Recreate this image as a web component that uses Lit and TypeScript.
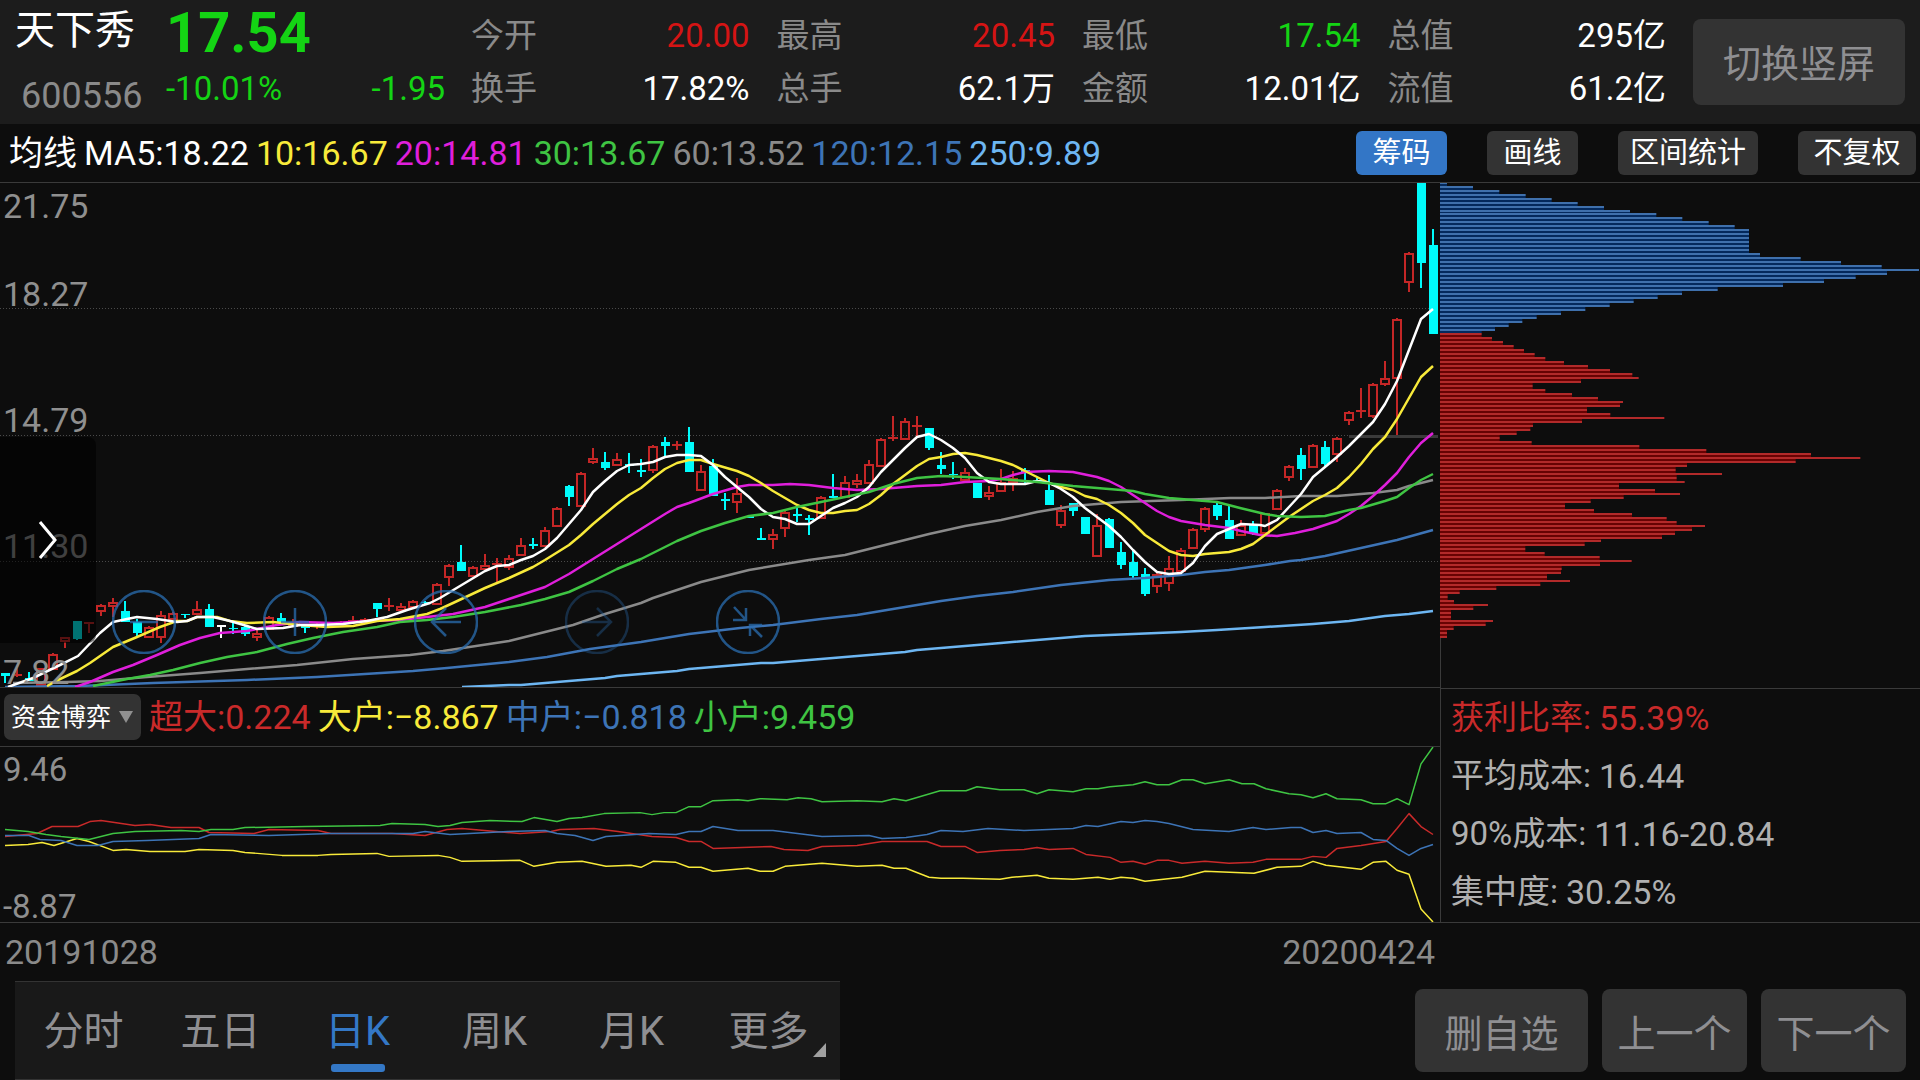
import { LitElement, html, svg, css } from "lit";
import { customElement, property, state } from "lit/decorators.js";
import { classMap } from "lit/directives/class-map.js";

type Tone = "up" | "down" | "flat" | "plain";

interface Quote {
  label: string;
  value: string;
  tone: Tone;
}

interface Series {
  tone: string;
  points: string;
}

const QUOTES: Quote[] = [
  { label: "今开", value: "20.00", tone: "up" },
  { label: "最高", value: "20.45", tone: "up" },
  { label: "最低", value: "17.54", tone: "down" },
  { label: "总值", value: "295亿", tone: "plain" },
  { label: "换手", value: "17.82%", tone: "plain" },
  { label: "总手", value: "62.1万", tone: "plain" },
  { label: "金额", value: "12.01亿", tone: "plain" },
  { label: "流值", value: "61.2亿", tone: "plain" },
];

const AVERAGES = [
  { tone: "white", text: "MA5:18.22" },
  { tone: "yellow", text: "10:16.67" },
  { tone: "magenta", text: "20:14.81" },
  { tone: "green", text: "30:13.67" },
  { tone: "gray", text: "60:13.52" },
  { tone: "blue", text: "120:12.15" },
  { tone: "sky", text: "250:9.89" },
];

const FUNDS = [
  { tone: "red", text: "超大:0.224" },
  { tone: "yellow", text: "大户:−8.867" },
  { tone: "blue", text: "中户:−0.818" },
  { tone: "green", text: "小户:9.459" },
];

/* One entry per trading day: high, body top, body bottom, low, in plot units.
   The letter is r (rise), c (fall) or w (unchanged). */
const CANDLES = `
491 491 494 501 c|486 492 495 495 r|490 496 499 499 c|486 486 503 503 r|471 472 487 487 r|455 455 459 466 r
439 439 457 458 c|440 440 441 451 r|422 423 429 434 r|416 420 424 435 r|419 429 440 440 c|437 440 451 456 c
444 445 455 455 r|429 433 455 461 r|430 431 437 438 r|432 432 433 436 c|419 427 432 433 r|422 427 445 445 c
443 443 445 456 w|441 446 447 452 c|444 445 452 454 c|448 451 455 459 r|434 435 447 447 r|431 436 440 442 c
437 440 444 445 r|444 444 446 451 c|441 443 446 447 r|440 440 442 442 r|439 440 441 442 r|434 438 440 440 r
436 437 439 440 r|421 421 427 435 c|416 423 425 429 r|421 424 428 429 r|418 419 425 425 r|419 420 421 422 c
401 402 422 422 r|382 383 395 404 r|363 380 389 389 c|384 385 394 395 r|372 383 387 388 r|376 381 383 400 r
373 376 385 388 r|356 363 373 373 r|356 362 364 367 c|345 348 364 365 r|325 326 344 344 r|303 304 315 324 c
290 291 324 325 r|266 276 280 282 r|270 280 286 288 c|271 277 283 283 r|271 282 284 291 c|277 288 290 295 c
263 264 288 291 r|255 260 264 274 c|259 262 265 268 r|245 260 290 290 c|283 289 308 309 r|277 284 314 314 c
311 317 319 328 c|296 311 320 331 r|334 334 336 336 c|346 356 358 358 c|347 352 357 367 r|329 330 346 355 r
325 332 334 340 c|333 336 338 353 c|314 315 336 337 r|292 314 316 316 c|294 300 315 316 r|292 298 302 306 r
278 282 301 302 r|256 257 284 284 r|234 255 258 259 r|236 239 257 258 r|234 243 245 254 r|246 246 266 268 c
270 283 287 292 c|280 292 293 297 c|286 290 298 298 r|301 301 316 316 c|304 310 314 318 r|287 300 309 310 r
289 296 300 309 r|286 288 291 303 c|296 298 300 300 c|293 308 323 323 c|323 328 343 346 r|321 321 329 334 c
335 335 352 352 c|332 343 374 374 r|336 337 366 366 c|360 370 383 387 c|368 380 394 396 c|386 392 412 414 c
391 392 404 411 r|374 386 401 409 r|366 368 389 389 r|346 347 366 366 r|325 326 347 350 r|320 323 334 338 c
324 338 357 357 c|338 343 353 353 r|339 343 352 353 c|331 331 351 352 r|307 308 327 328 r|283 284 295 299 r
266 273 287 298 c|262 263 285 285 r|259 265 282 286 c|255 256 272 280 r|229 230 238 243 r|206 228 231 236 r
201 202 234 236 r|179 196 202 204 r|136 137 196 253 r|70 71 100 110 r|0 0 81 106 c|47 63 152 152 c`
  .trim()
  .split(/[|\n]/)
  .map((row) => {
    const [high, top, bottom, low, kind] = row.split(" ");
    return { high: +high, top: +top, bottom: +bottom, low: +low, kind };
  });

const MA_LINES: Series[] = [
  {
    tone: "sky",
    points:
      "462,505 509,503 521,503 605,496 617,494 677,489 689,487 761,481 773,481 845,475 905,470 917,468 1001,461 1085,454 1133,452 1181,450 1217,448 1265,445 1313,442 1349,439 1385,434 1409,432 1433,429",
  },
  {
    tone: "blue",
    points:
      "5,505 80,504 153,501 247,498 317,495 413,489 447,486 509,480 547,475 590,467 641,460 689,452 740,446 773,443 821,437 857,433 941,419 977,414 1013,410 1061,403 1109,398 1145,396 1181,393 1205,390 1229,388 1265,383 1290,379 1301,378 1325,374 1361,366 1397,358 1433,348",
  },
  {
    tone: "gray",
    points:
      "13,501 67,500 100,499 147,495 200,491 247,487 297,483 353,477 410,473 443,469 509,459 545,450 573,443 605,432 641,421 653,416 701,400 749,388 809,378 845,373 881,364 929,352 965,344 1001,338 1037,330 1073,324 1121,320 1181,318 1230,316 1265,316 1301,314 1337,314 1373,311 1397,308 1409,304 1433,298",
  },
  {
    tone: "magenta",
    points:
      "75,505 90,500 113,490 133,483 157,473 180,463 200,456 220,451 247,449 277,443 300,440 333,441 370,439 400,438 427,435 453,432 485,425 509,417 545,405 569,392 593,377 617,362 641,347 665,332 677,325 689,321 713,312 737,305 749,303 773,303 790,302 809,303 833,306 857,308 881,307 917,304 941,303 965,300 989,299 1001,297 1013,293 1025,290 1049,289 1073,290 1097,295 1109,299 1121,305 1133,313 1157,329 1169,335 1181,339 1205,343 1229,346 1241,349 1260,353 1277,354 1295,351 1313,347 1337,339 1349,332 1361,324 1373,314 1385,303 1397,291 1409,275 1421,261 1433,251",
  },
  {
    tone: "yellow",
    points:
      "47,504 58,498 77,489 90,481 113,465 137,455 160,445 177,439 187,439 197,435 217,435 230,439 247,441 273,440 300,443 327,445 353,444 377,439 400,437 427,432 440,427 453,421 485,406 509,396 533,385 545,378 569,363 581,353 593,342 605,332 617,322 629,313 641,306 653,296 665,287 677,281 689,278 701,278 713,282 737,289 749,294 761,301 773,309 785,316 797,323 809,328 821,331 833,331 845,329 857,328 869,322 881,313 893,302 905,293 917,284 929,277 941,275 953,272 965,271 977,273 1001,279 1013,283 1025,289 1037,295 1049,301 1061,305 1073,308 1085,314 1097,317 1109,323 1121,331 1133,341 1145,353 1157,361 1169,369 1181,373 1193,374 1205,372 1229,370 1241,367 1253,362 1265,353 1277,344 1289,335 1313,319 1325,313 1337,306 1349,295 1361,282 1373,267 1385,255 1397,237 1409,216 1421,195 1433,184",
  },
  {
    tone: "white",
    points:
      "8,505 33,496 60,483 78,474 100,451 113,440 127,437 137,435 157,437 177,440 187,439 197,435 213,435 230,439 247,444 257,447 283,446 300,443 320,443 343,442 367,439 387,435 407,428 430,421 440,416 460,404 485,389 497,384 509,383 521,378 533,374 545,367 557,356 569,342 581,328 593,310 605,299 617,289 629,283 641,282 653,280 665,275 677,273 689,273 701,274 713,283 725,295 737,305 749,315 761,327 773,335 785,337 797,342 809,342 821,334 833,326 845,321 857,315 869,305 881,290 893,278 905,266 917,255 929,252 941,258 953,266 965,276 977,291 989,300 1001,302 1025,302 1037,299 1049,301 1061,307 1073,315 1085,326 1097,335 1109,344 1121,355 1133,368 1145,380 1157,390 1169,392 1181,391 1193,381 1205,364 1217,352 1229,347 1241,342 1260,343 1265,344 1277,338 1289,325 1301,312 1313,295 1325,285 1337,275 1349,264 1361,252 1373,240 1385,222 1397,199 1409,168 1421,137 1433,127",
  },
  {
    tone: "green",
    points:
      "93,504 127,497 150,493 173,488 200,481 227,475 257,470 287,462 313,456 343,450 377,445 400,440 427,438 453,435 485,430 521,423 545,417 569,410 593,399 617,387 641,377 677,359 701,349 725,341 749,334 773,331 797,325 821,320 845,315 869,310 893,302 917,296 941,294 965,295 1001,297 1037,300 1073,304 1109,307 1133,309 1145,312 1169,316 1193,318 1217,320 1240,326 1265,332 1277,334 1301,335 1325,334 1349,328 1361,326 1385,319 1397,315 1409,306 1421,298 1433,292",
  },
];

const FLOW_LINES: Series[] = [
  {
    tone: "red",
    points:
      "5,90 37,87 52,80 78,80 90,75 101,74 135,79 150,78 171,81 199,81 209,86 254,87 269,83 318,84 331,87 392,87 425,89 447,83 462,82 520,87 551,85 560,83 594,82 618,85 652,90 676,91 689,95 701,95 713,102 771,100 784,103 808,104 822,100 857,99 882,95 927,95 941,100 965,100 977,106 1000,104 1024,103 1037,101 1049,103 1073,102 1086,108 1110,111 1121,116 1133,115 1145,118 1157,114 1169,114 1182,117 1205,115 1229,117 1253,116 1266,113 1301,113 1313,110 1326,111 1337,102 1361,99 1386,95 1397,82 1409,67 1421,80 1433,88",
  },
  {
    tone: "yellow",
    points:
      "5,99 28,98 42,96 54,99 77,92 89,95 113,104 126,103 150,105 185,105 199,103 233,104 245,106 282,109 318,109 331,108 377,107 389,110 438,109 450,111 462,115 520,114 534,120 557,116 582,115 606,120 631,119 641,121 653,115 676,116 689,121 701,121 713,125 748,122 760,125 773,125 785,120 822,117 857,120 882,119 894,122 906,122 929,131 941,132 963,132 1000,133 1012,131 1037,129 1049,132 1073,133 1098,131 1110,133 1121,131 1133,132 1145,135 1182,131 1205,125 1254,127 1277,121 1301,120 1313,115 1326,119 1361,123 1373,116 1386,115 1397,124 1409,128 1421,163 1433,176",
  },
  {
    tone: "blue",
    points:
      "5,89 29,89 40,93 61,94 77,99 98,99 113,95 147,94 199,92 211,88 269,89 331,87 392,87 413,87 425,85 450,88 508,85 545,84 557,87 575,89 593,94 606,90 649,87 676,88 689,85 701,85 713,80 738,84 773,84 822,90 869,89 882,92 906,91 927,88 941,84 963,85 988,82 1024,84 1073,82 1086,79 1098,80 1121,75 1133,76 1145,74 1157,75 1169,77 1193,83 1229,85 1253,81 1266,83 1291,81 1301,81 1313,86 1326,84 1337,87 1361,86 1373,93 1386,94 1397,102 1409,109 1421,102 1433,98",
  },
  {
    tone: "green",
    points:
      "5,83 28,85 46,88 61,90 89,93 113,87 135,85 181,84 199,85 211,83 233,83 245,81 306,80 380,79 392,77 425,78 438,80 450,79 462,76 490,74 522,75 534,71 557,75 569,72 582,71 604,67 640,66 652,68 664,66 676,66 689,60 701,60 713,54 738,53 748,54 760,52 787,53 798,51 811,52 822,55 857,54 882,55 894,52 906,54 940,44 966,44 977,40 1000,43 1024,43 1037,47 1049,43 1073,45 1086,42 1098,42 1110,40 1133,38 1145,35 1157,38 1169,38 1182,33 1193,33 1205,37 1229,33 1242,37 1254,37 1266,42 1289,47 1301,48 1313,51 1326,47 1337,52 1361,53 1373,57 1386,57 1397,52 1409,58 1421,17 1433,0",
  },
];

/* Holdings per price level from the top down; the first 38 levels lie above the last price. */
const CHIPS = [
  21, 99, 178, 257, 335, 413, 492, 570, 649, 727, 806, 884, 927, 927, 927, 927, 927, 927, 960, 1082,
  1203, 1325, 1437, 1341, 1247, 1152, 1029, 833, 726, 653, 581, 509, 436, 363, 290, 247, 206, 165,
  125, 156, 189, 221, 252, 284, 316, 372, 444, 510, 577, 596, 423, 278, 316, 396, 474, 549, 540,
  441, 511, 673, 426, 279, 271, 230, 179, 275, 598, 799, 1113, 1261, 1067, 741, 707, 846, 710, 734,
  537, 645, 720, 551, 452, 375, 462, 576, 680, 710, 795, 756, 705, 666, 483, 434, 256, 314, 479,
  575, 480, 365, 363, 321, 390, 301, 169, 59, 23, 42, 144, 100, 33, 33, 159, 137, 41, 21, 21,
];
const CHIPS_ABOVE = 38;

const palette = css`
  .white { --tone: #ffffff; }
  .yellow { --tone: #f8ea3a; }
  .magenta { --tone: #e01fdc; }
  .green { --tone: #3fc443; }
  .gray { --tone: #8a8a8a; }
  .blue { --tone: #3d74b6; }
  .sky { --tone: #6db6f2; }
  .red { --tone: #c92a2a; }
  .up { --tone: #d51414; }
  .down { --tone: #14d414; }
  .plain { --tone: #ffffff; }
`;

@customElement("candle-chart")
export class CandleChart extends LitElement {
  static styles = [
    palette,
    css`
      :host { display: block; position: relative; min-height: 0; }
      .plot { position: absolute; inset: 0; width: 100%; height: 100%; display: block; }
      .grid { stroke: #4a4a4a; stroke-width: 1; stroke-dasharray: 1 2; }
      .cost { stroke: #3a3a3a; stroke-width: 3; }
      .line { fill: none; stroke: var(--tone); stroke-width: 2.5; stroke-linejoin: round; }
      .r .wick, .r .body { stroke: #c42626; stroke-width: 2; fill: none; }
      .c .wick { stroke: #00fbfb; stroke-width: 2; }
      .c .body { fill: #00fbfb; }
      .w .wick { stroke: #ffffff; stroke-width: 2; }
      .w .body { fill: #ffffff; }
      .scale {
        position: absolute; inset: 0; padding: 0 3px;
        display: grid; grid-template-rows: repeat(4, 1fr);
        color: #8f8f8f; font-size: 34px; line-height: 30px; pointer-events: none;
      }
      .level { display: flex; flex-direction: column; justify-content: flex-end; }
      .level:first-child { justify-content: space-between; padding-top: 8px; }
      .drawer {
        position: absolute; left: 0; bottom: 44px; width: 96px; height: 206px;
        border: 0; padding: 0; border-radius: 0 8px 8px 0;
        background: rgba(0, 0, 0, 0.55);
        display: flex; align-items: center; justify-content: center;
      }
      .drawer svg { width: 20px; height: 40px; }
      .tools { position: absolute; left: 112px; bottom: 33px; display: flex; gap: 87px; }
      .tool { width: 64px; height: 64px; border: 0; padding: 0; background: none; color: #2a6db0; opacity: 0.75; }
      .tool:disabled { opacity: 0.35; }
      .tool svg { display: block; width: 64px; height: 64px; fill: none; stroke: currentColor; stroke-width: 2.5; }
    `,
  ];

  private candle(c: (typeof CANDLES)[number], i: number) {
    const x = 5 + i * 12;
    const thin = c.bottom - c.top < 4;
    if (c.kind === "r") {
      return svg`<g class="r">
        <path class="wick" d="M${x} ${c.high}V${c.top + 1}M${x} ${c.bottom - 1}V${c.low}"></path>
        ${thin
          ? svg`<path class="body" d="M${x - 5} ${c.top + 1}H${x + 5}"></path>`
          : svg`<rect class="body" x=${x - 4} y=${c.top + 1} width="8" height=${c.bottom - c.top - 1}></rect>`}
      </g>`;
    }
    return svg`<g class=${c.kind}>
      <path class="wick" d="M${x} ${c.high}V${c.low}"></path>
      <rect class="body" x=${x - 4} y=${c.top} width="9" height=${c.bottom - c.top}></rect>
    </g>`;
  }

  render() {
    return html`
      <svg class="plot" viewBox="0 1 1440 504" preserveAspectRatio="none" role="img" aria-label="日K线图">
        <path class="grid" d="M0 126.5H1438M0 253.5H1438M0 379.5H1438"></path>
        <path class="cost" d="M1349 254.5H1438"></path>
        ${CANDLES.map((c, i) => this.candle(c, i))}
        ${MA_LINES.map((s) => svg`<polyline class="line ${s.tone}" points=${s.points}></polyline>`)}
      </svg>
      <div class="scale">
        <div class="level"><span>21.75</span><span>18.27</span></div>
        <div class="level"><span>14.79</span></div>
        <div class="level"><span>11.30</span></div>
        <div class="level"><span>7.82</span></div>
      </div>
      <button class="drawer" aria-label="展开">
        <svg viewBox="0 0 20 40" fill="none" stroke="#fff" stroke-width="3"><path d="M2 2L17 20L2 38"></path></svg>
      </button>
      <div class="tools">
        <button class="tool" aria-label="缩小">
          <svg viewBox="0 0 64 64"><circle cx="32" cy="32" r="31"></circle><path d="M18 32H46"></path></svg>
        </button>
        <button class="tool" aria-label="放大">
          <svg viewBox="0 0 64 64"><circle cx="32" cy="32" r="31"></circle><path d="M18 32H46M32 18V46"></path></svg>
        </button>
        <button class="tool" aria-label="左移">
          <svg viewBox="0 0 64 64"><circle cx="32" cy="32" r="31"></circle><path d="M47 32H18M32 18L18 32L32 46"></path></svg>
        </button>
        <button class="tool" aria-label="右移" disabled>
          <svg viewBox="0 0 64 64"><circle cx="32" cy="32" r="31"></circle><path d="M17 32H46M32 18L46 32L32 46"></path></svg>
        </button>
        <button class="tool" aria-label="收起">
          <svg viewBox="0 0 64 64">
            <circle cx="32" cy="32" r="31"></circle>
            <path d="M18 17L30 30M30 18V30H17M46 47L34 35M34 46V35H46"></path>
          </svg>
        </button>
      </div>
    `;
  }
}

@customElement("chip-chart")
export class ChipChart extends LitElement {
  static styles = css`
    :host { display: block; position: relative; min-height: 0; }
    .plot { position: absolute; inset: 0; width: 100%; height: 100%; display: block; }
    .above { fill: #3f70ac; }
    .above-gap { fill: #04295c; }
    .below { fill: #b22a2a; }
    .below-gap { fill: #680303; }
    .axis { stroke: #3a3a3a; stroke-width: 3; }
  `;

  render() {
    const top = (i: number) => i * 4 - (i >= 8 ? 1 : 0) - (i >= 90 ? 1 : 0);
    return html`
      <svg class="plot" viewBox="0 1 1440 505" preserveAspectRatio="none" role="img" aria-label="筹码分布">
        <path class="axis" d="M1.5 0V506"></path>
        ${CHIPS.map((w, i) => {
          const side = i < CHIPS_ABOVE ? "above" : "below";
          const next = Math.min(w, CHIPS[i + 1] ?? 0);
          return svg`
            <rect class="${side}-gap" x="0" y=${top(i) + 2} width=${next} height="2"></rect>
            <rect class=${side} x="0" y=${top(i)} width=${w} height="2"></rect>`;
        })}
      </svg>
    `;
  }
}

@customElement("flow-chart")
export class FlowChart extends LitElement {
  static styles = [
    palette,
    css`
      :host { display: block; position: relative; }
      .plot { position: absolute; inset: 0; width: 100%; height: 100%; display: block; }
      .line { fill: none; stroke: var(--tone); stroke-width: 1.5; stroke-linejoin: round; }
      .scale {
        position: absolute; inset: 0; padding: 8px 3px 0;
        display: flex; flex-direction: column; justify-content: space-between;
        color: #8f8f8f; font-size: 33px; line-height: 30px;
      }
    `,
  ];

  render() {
    return html`
      <svg class="plot" viewBox="0 0 1440 176" preserveAspectRatio="none" role="img" aria-label="资金博弈图">
        ${FLOW_LINES.map((s) => svg`<polyline class="line ${s.tone}" points=${s.points}></polyline>`)}
      </svg>
      <div class="scale"><span>9.46</span><span>-8.87</span></div>
    `;
  }
}

@customElement("period-tabs")
export class PeriodTabs extends LitElement {
  @property() active = "日K";

  static styles = css`
    :host { display: block; }
    .tabs { display: grid; grid-template-columns: repeat(6, 1fr); height: 100%; padding-right: 3px; box-sizing: border-box; }
    .tab {
      position: relative; border: 0; padding: 2px 0 0; background: none;
      font: inherit; font-size: 40px; line-height: 48px; color: #8f8f92;
    }
    .on { color: #3478c6; }
    .on::after {
      content: ""; position: absolute; left: 50%; bottom: 7px; width: 54px; height: 8px;
      margin-left: -27px; border-radius: 3px; background: #3478c6;
    }
    .more::after {
      content: ""; position: absolute; right: 11px; bottom: 22px; width: 13px; height: 14px;
      background: #a0a0a0; clip-path: polygon(100% 0, 100% 100%, 0 100%);
    }
  `;

  render() {
    return html`<nav class="tabs" aria-label="周期">
      ${["分时", "五日", "日K", "周K", "月K", "更多"].map(
        (t) => html`<button
          class=${classMap({ tab: true, on: t === this.active, more: t === "更多" })}
          @click=${() => (this.active = t)}
        >${t}</button>`
      )}
    </nav>`;
  }
}

@customElement("app-root")
export class AppRoot extends LitElement {
  @state() private chips = true;

  static styles = [
    palette,
    css`
      :host {
        display: flex; flex-direction: column; min-height: 100vh; box-sizing: border-box;
        background: #0d0d0d; color: #ffffff;
        font-family: Roboto, "Noto Sans CJK SC", sans-serif; font-size: 33px;
      }
      button, select { font-family: inherit; cursor: pointer; }

      .header {
        display: flex; height: 124px; padding-right: 15px; box-sizing: border-box; background: #1c1c1c;
      }
      .stock { width: 166px; box-sizing: border-box; padding-left: 15px; }
      .name { margin: 0; font-size: 40px; line-height: 62px; font-weight: 400; }
      .code { padding: 10px 0 0 6px; font-size: 36px; line-height: 48px; color: #8a8a8a; }
      .last { width: 279px; color: #14d414; }
      .price { font-size: 56px; line-height: 62px; height: 62px; font-weight: 700; padding-top: 2px; box-sizing: border-box; }
      .change { display: flex; justify-content: space-between; line-height: 53px; }
      .quotes {
        flex: 1; margin: 0; padding: 9px 27px 0 26px;
        display: grid; grid-template-columns: repeat(4, 1fr); grid-auto-rows: 53px; column-gap: 27px;
      }
      .quote { display: flex; justify-content: space-between; line-height: 53px; }
      .quote dt { color: #8a8a8a; }
      .quote dd { margin: 0; color: var(--tone); }
      .rotate {
        width: 212px; height: 86px; margin-top: 19px; padding: 0 0 4px; border: 0; border-radius: 8px;
        background: #333333; color: #8f8f92; font-size: 38px;
      }

      .toolbar { display: flex; align-items: center; height: 58px; padding: 0 4px 0 9px; }
      .legend { display: flex; gap: 7px; line-height: 60px; font-size: 34px; white-space: nowrap; }
      .tone { color: var(--tone); }
      .options { display: flex; gap: 40px; margin-left: auto; padding-bottom: 1px; }
      .option {
        min-width: 91px; height: 44px; padding: 0 12px; border: 0; border-radius: 6px;
        background: #333333; color: #ffffff; font-size: 29px; line-height: 44px;
      }
      .option.wide { min-width: 118px; }
      .option.on { background: #3376c6; }

      .board { flex: 1; display: grid; grid-template-columns: 3fr 1fr; border-top: 1px solid #3a3a3a; }
      .left, .right { display: flex; flex-direction: column; }
      .left candle-chart, .right chip-chart { flex: 1; min-height: 320px; }
      .funds {
        display: flex; align-items: center; gap: 8px; height: 60px; box-sizing: border-box;
        border: solid #3a3a3a; border-width: 1px 0; padding-left: 4px;
      }
      .picker { position: relative; display: flex; align-items: center; }
      .picker select {
        appearance: none; width: 137px; height: 46px; padding: 0 0 0 7px; border: 0; border-radius: 7px;
        background: #333333; color: #ffffff; font-size: 25px;
      }
      .picker::after {
        content: ""; position: absolute; right: 8px; top: 17px; width: 14px; height: 12px;
        background: #909090; clip-path: polygon(0 0, 100% 0, 50% 100%); pointer-events: none;
      }
      .left flow-chart { height: 175px; }
      .stats {
        margin: 0; padding: 0 10px; height: 234px; box-sizing: border-box; line-height: 58px; color: #b0b0b0;
        border: solid #3a3a3a; border-width: 1px 0 0 1px;
      }
      .stat { display: flex; gap: 8px; }
      .stat dt, .stat dd { margin: 0; color: var(--tone); }
      .stat dd { font-size: 34px; }

      .dates {
        display: grid; grid-template-columns: 3fr 1fr; border-top: 1px solid #3a3a3a;
        line-height: 58px; color: #8a8a8a; font-size: 34px;
      }
      .range { display: flex; justify-content: space-between; padding: 0 5px; }

      .footer { display: flex; justify-content: space-between; height: 99px; padding: 0 14px 0 15px; box-sizing: border-box; }
      .footer period-tabs {
        width: 825px; box-sizing: border-box; background: #191919; border: solid #333333; border-width: 1px 0;
      }
      .actions { display: flex; gap: 14px; padding: 8px 0; }
      .action {
        width: 145px; border: 0; padding: 0; border-radius: 8px;
        background: #333333; color: #8f8f92; font-size: 38px;
      }
      .action.wide { width: 173px; }
    `,
  ];

  render() {
    return html`
      <header class="header">
        <div class="stock">
          <h1 class="name">天下秀</h1>
          <div class="code">600556</div>
        </div>
        <div class="last">
          <div class="price">17.54</div>
          <div class="change"><span>-10.01%</span><span>-1.95</span></div>
        </div>
        <dl class="quotes">
          ${QUOTES.map((q) => html`<div class="quote"><dt>${q.label}</dt><dd class=${q.tone}>${q.value}</dd></div>`)}
        </dl>
        <button class="rotate">切换竖屏</button>
      </header>

      <div class="toolbar">
        <div class="legend">
          <span>均线</span>
          ${AVERAGES.map((a) => html`<span class="tone ${a.tone}">${a.text}</span>`)}
        </div>
        <div class="options">
          <button
            class=${classMap({ option: true, on: this.chips })}
            aria-pressed=${this.chips}
            @click=${() => (this.chips = !this.chips)}
          >筹码</button>
          <button class="option">画线</button>
          <button class="option">区间统计</button>
          <button class="option wide">不复权</button>
        </div>
      </div>

      <main class="board">
        <section class="left">
          <candle-chart></candle-chart>
          <div class="funds">
            <div class="picker">
              <select aria-label="指标"><option>资金博弈</option></select>
            </div>
            <div class="legend">
              ${FUNDS.map((f) => html`<span class="tone ${f.tone}">${f.text}</span>`)}
            </div>
          </div>
          <flow-chart></flow-chart>
        </section>
        <aside class="right">
          <chip-chart></chip-chart>
          <dl class="stats">
            <div class="stat red"><dt>获利比率:</dt><dd>55.39%</dd></div>
            <div class="stat"><dt>平均成本:</dt><dd>16.44</dd></div>
            <div class="stat"><dt>90%成本:</dt><dd>11.16-20.84</dd></div>
            <div class="stat"><dt>集中度:</dt><dd>30.25%</dd></div>
          </dl>
        </aside>
      </main>

      <div class="dates">
        <div class="range"><span>20191028</span><span>20200424</span></div>
      </div>

      <footer class="footer">
        <period-tabs></period-tabs>
        <div class="actions">
          <button class="action wide">删自选</button>
          <button class="action">上一个</button>
          <button class="action">下一个</button>
        </div>
      </footer>
    `;
  }
}
